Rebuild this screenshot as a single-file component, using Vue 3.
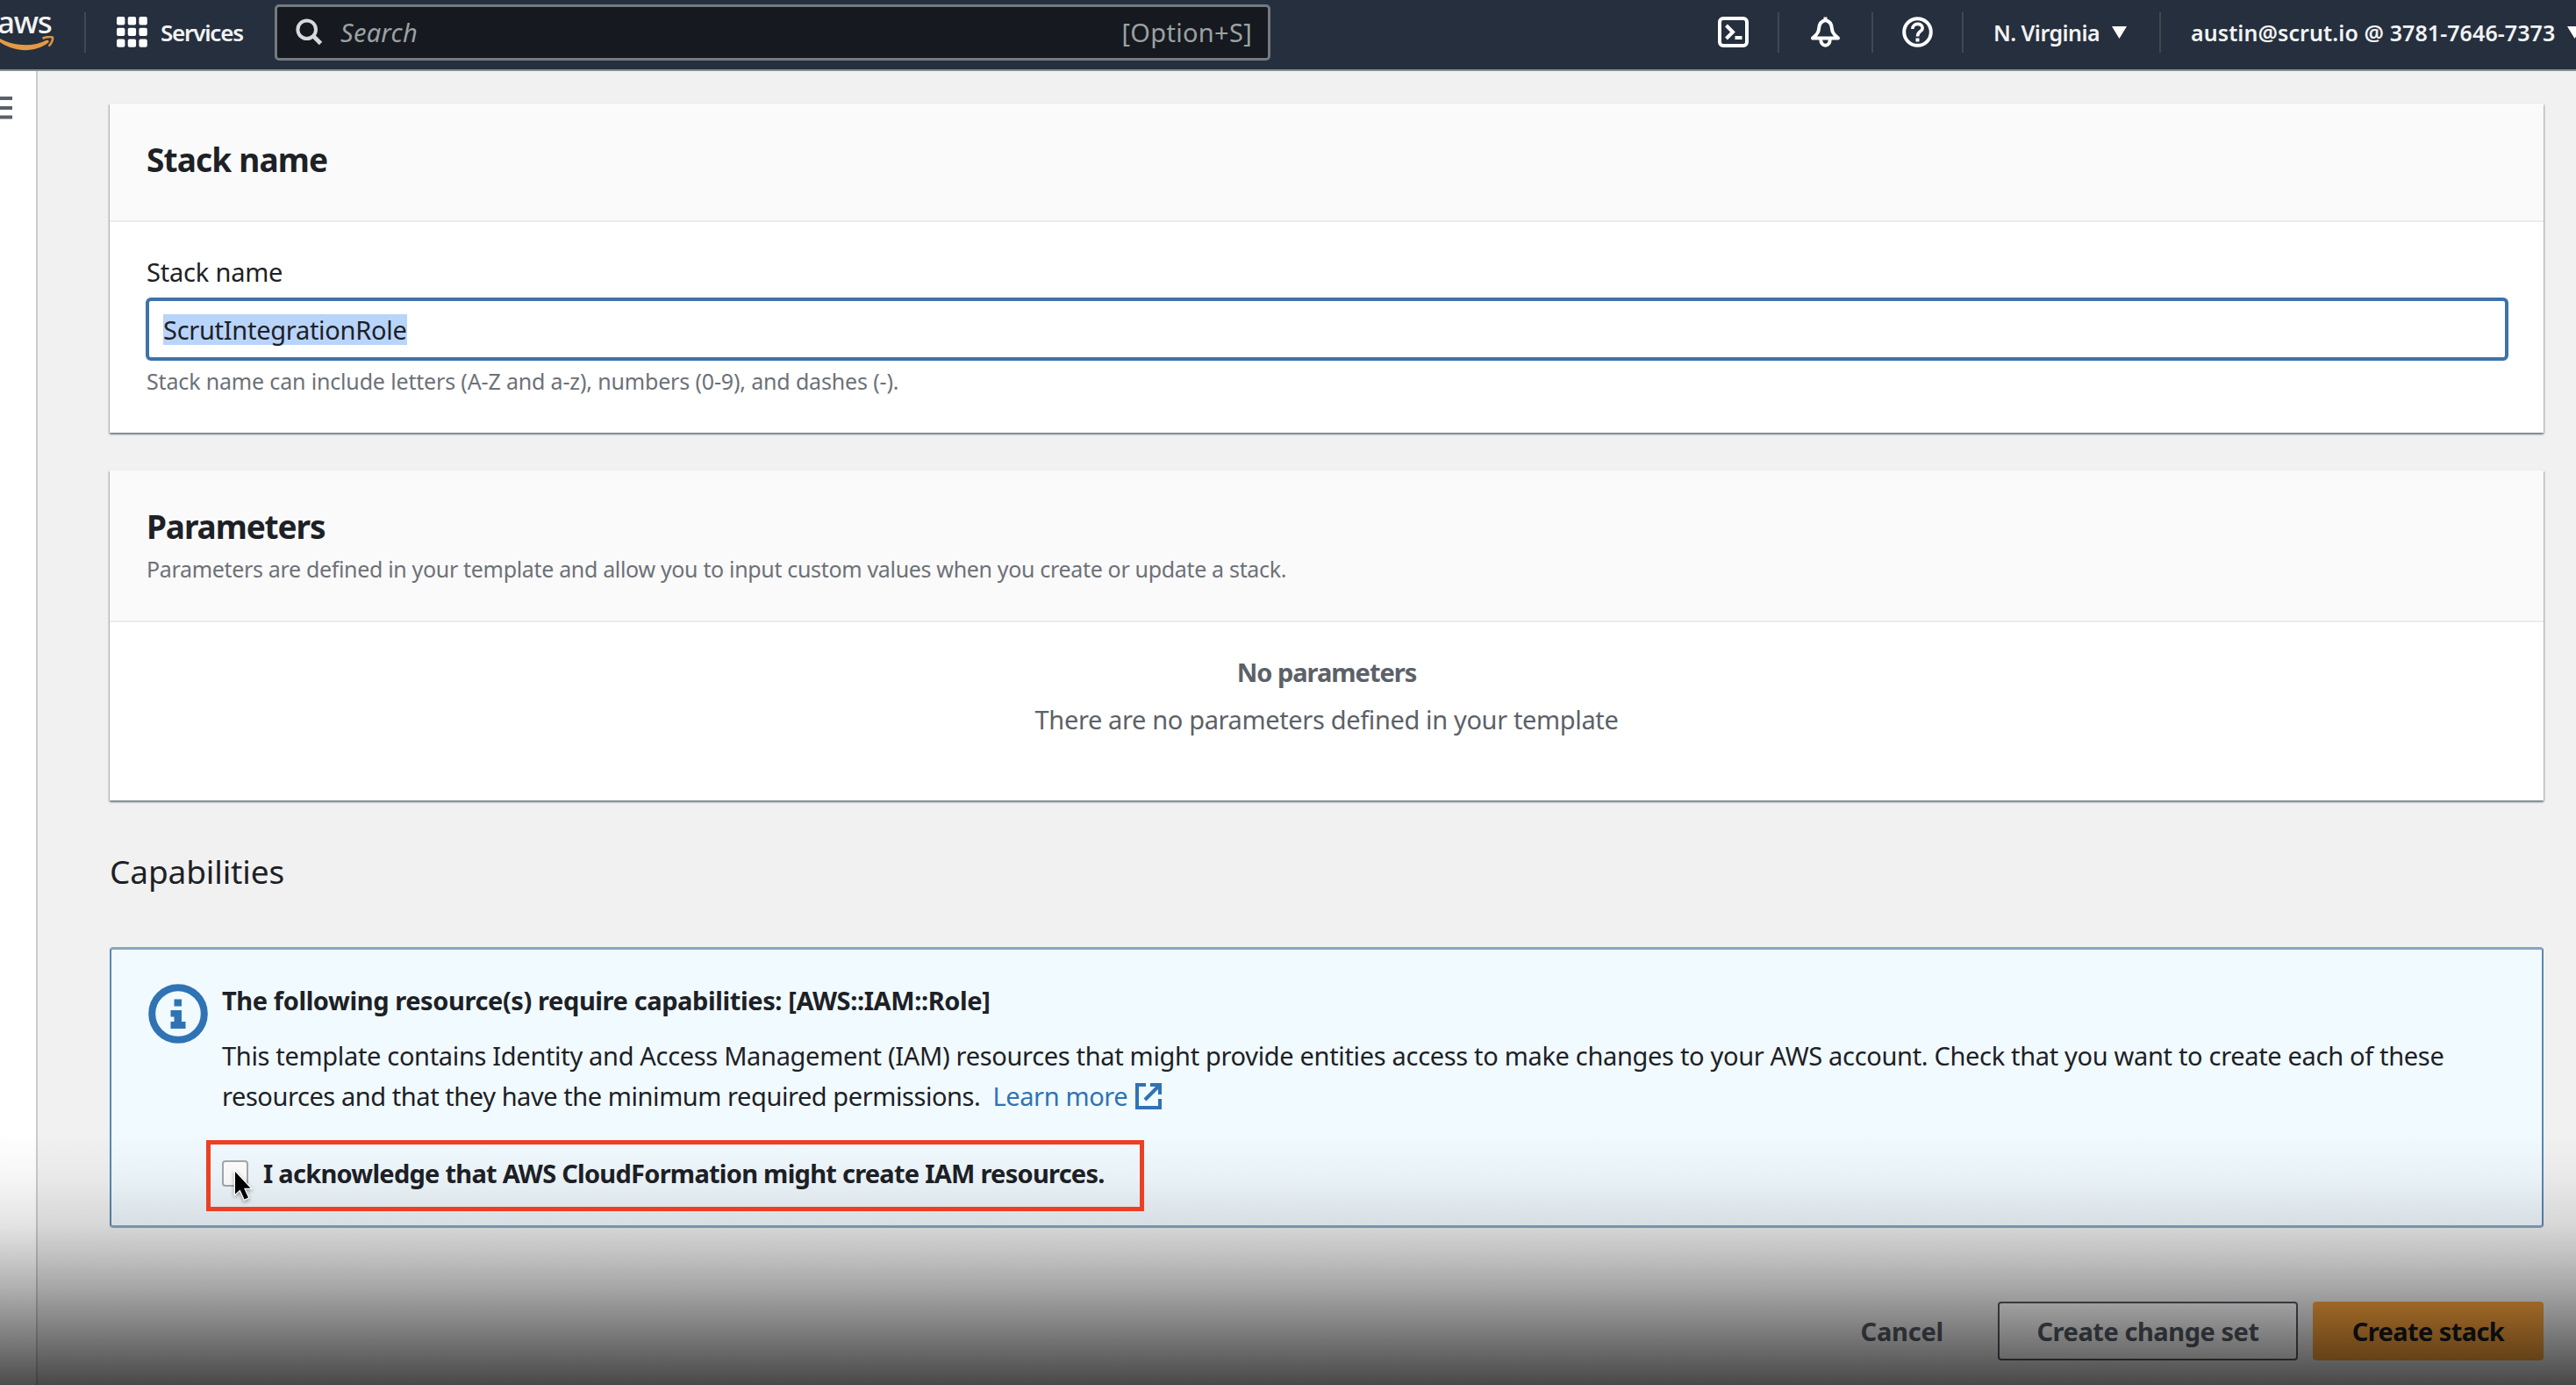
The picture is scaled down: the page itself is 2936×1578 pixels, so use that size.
<template>
  <div class="page">
    <header class="topbar">
      <div class="logo">
        <span class="logo-text">aws</span>
        <svg class="logo-smile" width="64" height="18" viewBox="0 0 64 18">
          <path d="M0 3 C17 12 38 12.500 52.500 5 C55 4 57 6 54.500 8 C40 19 17 19 0 7 Z" fill="#e39a45" />
          <path d="M48.500 2.700 C54 0.500 60 0.800 60 2 C60.300 4.500 58.500 9 55.500 11.500" fill="none" stroke="#dc9340" stroke-width="2.600" />
        </svg>
      </div>

      <div class="services">
        <svg width="35" height="35" viewBox="0 0 35 35" fill="#fff">
          <template v-for="y in gridSteps" :key="y">
            <rect v-for="x in gridSteps" :key="x" :x="x" :y="y" width="9.400" height="9.400" rx="2" />
          </template>
        </svg>
        <span class="services-label">Services</span>
      </div>

      <div class="search">
        <svg class="search-icon" width="31" height="31" viewBox="0 0 31 31" fill="none" stroke="#d5dbdb" stroke-width="4">
          <circle cx="12.700" cy="12.700" r="10.300" />
          <path d="M20 20 L28.500 28.500" stroke-width="4.800" />
        </svg>
        <span class="search-text">Search</span>
        <span class="search-hint">[Option+S]</span>
      </div>

      <div class="cell cell-shell">
        <svg width="35" height="35" viewBox="0 0 35 35" fill="none" stroke="#fff" stroke-width="4">
          <rect x="2" y="2" width="31" height="31" rx="4" />
          <path d="M9.500 10 L17 17.500 L9.500 25" />
          <path d="M19.500 24 H27.500" />
        </svg>
      </div>
      <div class="cell cell-bell">
        <svg width="35" height="35" viewBox="0 0 35 35" fill="none" stroke="#fff" stroke-width="4" stroke-linejoin="round">
          <path d="M17.500 4 C12.500 5 10.300 9 10 14 C9.700 19.500 6 21.500 3 24.500 H32 C29 21.500 25.300 19.500 25 14 C24.700 9 22.500 5 17.500 4 Z" />
          <path d="M17.500 0.500 V5" />
          <path d="M12.300 26 C12.300 35 22.700 35 22.700 26" />
        </svg>
      </div>
      <div class="cell cell-help">
        <svg width="35" height="35" viewBox="0 0 35 35" fill="none" stroke="#fff" stroke-width="4">
          <circle cx="17.500" cy="17.500" r="15.300" />
          <path d="M11.800 14 C11.800 6.500 23.200 6.800 23.200 13 C23.200 17 17.500 16.500 17.500 22.500" stroke-width="3.600" />
          <path d="M17.500 24.500 V28.500" />
        </svg>
      </div>
      <div class="cell cell-region">
        <span class="region-text">N. Virginia</span>
        <svg width="17" height="14" viewBox="0 0 17 14"><path d="M0 0 H17 L8.500 14 Z" fill="#fff" /></svg>
      </div>
      <div class="cell cell-account">
        <span class="account-text">austin@scrut.io @ 3781-7646-7373</span>
        <svg width="17" height="14" viewBox="0 0 17 14"><path d="M0 0 H17 L8.500 14 Z" fill="#fff" /></svg>
      </div>
    </header>

    <div class="layout">
      <aside class="sidebar">
        <svg width="14" height="26" viewBox="0 0 14 26" fill="#5a6069">
          <rect x="0" y="0" width="14" height="4" />
          <rect x="0" y="11" width="14" height="4" />
          <rect x="0" y="21.500" width="14" height="4" />
        </svg>
      </aside>

      <main class="content">
        <section class="card card-stack">
          <div class="card-header">
            <h2 class="card-title">Stack name</h2>
          </div>
          <div class="card-body">
            <label class="label">Stack name</label>
            <div class="input">
              <span class="selection">{{ stackName }}</span>
            </div>
            <p class="hint">Stack name can include letters (A-Z and a-z), numbers (0-9), and dashes (-).</p>
          </div>
        </section>

        <section class="card card-params">
          <div class="card-header">
            <h2 class="card-title params-title">Parameters</h2>
            <p class="description">Parameters are defined in your template and allow you to input custom values when you create or update a stack.</p>
          </div>
          <div class="empty">
            <p class="empty-title">No parameters</p>
            <p class="empty-text">There are no parameters defined in your template</p>
          </div>
        </section>

        <h2 class="capabilities">Capabilities</h2>

        <section class="alert">
          <svg class="info-icon" width="68" height="68" viewBox="0 0 68 68">
            <circle cx="34" cy="34" r="29.800" fill="none" stroke="#2f73b4" stroke-width="8" />
            <path d="M29.500 17.500 h8.500 v8 h-8.500 z M25.500 30 h12.500 v13 h4.500 v8 h-17 v-8 h4 v-5.500 h-4 z" fill="#2f73b4" />
          </svg>
          <div class="alert-content">
            <p class="alert-title">The following resource(s) require capabilities: [AWS::IAM::Role]</p>
            <p class="alert-text">
              <span class="line-one">This template contains Identity and Access Management (IAM) resources that might provide entities access to make changes to your AWS account. Check that you want to create each of these</span><br />
              <span class="line-two">resources and that they have the minimum required permissions.</span>
              <a class="learn-more">Learn more<svg class="external" width="30" height="30" viewBox="0 0 30 30" fill="none" stroke="#2f73b4" stroke-width="4">
                <path d="M12 2 H2 V28 H28 V18" />
                <path d="M17 2 H28 V13" />
                <path d="M28 2 L11 19" />
              </svg></a>
            </p>
            <div class="acknowledge">
              <span class="checkbox"></span>
              <span class="acknowledge-text">I acknowledge that AWS CloudFormation might create IAM resources.</span>
              <span class="highlight"></span>
              <svg class="cursor" width="28" height="42" viewBox="0 0 28 42">
                <path d="M3 3 V28.500 L8.600 23.400 L13.600 34.500 L18 32.500 L13 21.700 H20.500 Z" fill="#000" stroke="#fff" stroke-width="2.500" paint-order="stroke" />
              </svg>
            </div>
          </div>
        </section>

        <div class="actions">
          <button class="btn btn-link">Cancel</button>
          <button class="btn btn-normal">Create change set</button>
          <button class="btn btn-primary">Create stack</button>
        </div>
      </main>
    </div>

    <div class="fade"></div>
  </div>
</template>

<script setup>
import { ref } from 'vue';

const stackName = ref('ScrutIntegrationRole');
const gridSteps = [0, 12.7, 25.4];
</script>

<style>
body {
  margin: 0;
  overflow: hidden;
}
</style>

<style scoped>
.page {
  position: relative;
  width: 2936px;
  height: 1578px;
  overflow: hidden;
  background: #f1f1f1;
  color: #1d2126;
  font-family: 'Noto Sans', 'Open Sans', sans-serif;
  font-size: 29px;
  line-height: 46px;
  white-space: nowrap;
}

.page * {
  box-sizing: border-box;
}

p,
h2 {
  margin: 0;
}

svg {
  flex-shrink: 0;
}

/* Top bar */
.topbar {
  display: flex;
  align-items: center;
  height: 81px;
  padding-bottom: 6px;
  background: #252f3e;
  border-bottom: 2px solid #8b9097;
  color: #f2f3f3;
}

.topbar > * {
  flex-shrink: 0;
}

.logo {
  width: 98px;
  height: 46px;
  border-right: 2px solid #414852;
}

.logo-text {
  display: block;
  margin-left: -3px;
  font-size: 35px;
  font-weight: 500;
  line-height: 22px;
  letter-spacing: -1.3px;
}

.logo-smile {
  display: block;
  margin-top: 5px;
}

.services {
  display: flex;
  align-items: center;
  gap: 15px;
  width: 215px;
  padding-left: 35px;
}

.services-label {
  font-size: 26px;
  font-weight: 600;
  letter-spacing: -1.2px;
}

.search {
  display: flex;
  align-items: center;
  width: 1135px;
  height: 64px;
  padding: 0 18px 0 21px;
  background: #16191f;
  border: 3px solid #737b7f;
  border-radius: 5px;
  color: #9aa2a2;
}

.search-text {
  margin-left: 20px;
  padding-top: 1px;
  font-style: italic;
  letter-spacing: 0.26px;
}

.search-hint {
  margin-left: auto;
  padding-top: 1px;
  letter-spacing: 0.3px;
}

.cell {
  display: flex;
  align-items: center;
  justify-content: center;
  height: 46px;
  border-left: 2px solid #414852;
}

.cell-shell {
  width: 104px;
  margin-left: 474px;
  border-left-color: transparent;
}

.cell-bell {
  width: 107px;
}

.cell-help {
  width: 103px;
}

.cell-region,
.cell-account {
  justify-content: flex-start;
  gap: 14px;
  padding-left: 34px;
  font-size: 25px;
  font-weight: 600;
}

.cell-region {
  width: 225px;
}

.region-text {
  letter-spacing: -0.54px;
}

.account-text {
  letter-spacing: 0.08px;
}

/* Page layout */
.layout {
  display: flex;
  height: 1497px;
}

.sidebar {
  width: 43px;
  padding-top: 29px;
  background: #fff;
  border-right: 2px solid #c9cdce;
}

.sidebar svg {
  display: block;
}

.content {
  flex: 1;
  padding: 37px 37px 0 82px;
}

/* Cards */
.card {
  background: #fff;
  box-shadow: 0 2px 2px rgba(0, 28, 36, 0.4), 1px 1px 2px rgba(0, 28, 36, 0.2), -1px 1px 2px rgba(0, 28, 36, 0.2);
}

.card-stack {
  height: 375px;
}

.card-params {
  height: 376px;
  margin-top: 43px;
}

.card-header {
  height: 135px;
  padding: 41px 42px 0;
  background: #fafafa;
  border-bottom: 2px solid #ececec;
}

.card-params .card-header {
  height: 173px;
}

.card-title {
  font-size: 37px;
  font-weight: 700;
  letter-spacing: -0.84px;
}

.params-title {
  letter-spacing: -1.11px;
}

.card-body {
  padding: 34px 40px 0 41px;
}

.label {
  display: block;
  padding-left: 1px;
  letter-spacing: -0.2px;
}

.input {
  display: flex;
  align-items: center;
  height: 72px;
  margin-top: 6px;
  padding-left: 16px;
  border: 4px solid #3f72a8;
  border-radius: 6px;
}

.selection {
  background: #b9d4fb;
  line-height: 35px;
  letter-spacing: -0.28px;
}

.hint,
.description {
  font-size: 25px;
  line-height: 38px;
  color: #6d7178;
}

.hint {
  margin-top: 4px;
  padding-left: 1px;
  letter-spacing: -0.16px;
}

.description {
  margin-top: 6px;
  letter-spacing: -0.33px;
}

.empty {
  padding-top: 34px;
  text-align: center;
  color: #5c6168;
}

.empty-title {
  font-weight: 700;
  letter-spacing: -1.01px;
}

.empty-text {
  margin-top: 8px;
  letter-spacing: -0.36px;
}

.capabilities {
  margin-top: 58px;
  font-size: 37px;
  font-weight: 400;
  letter-spacing: -0.12px;
}

/* Info alert */
.alert {
  display: flex;
  gap: 16px;
  height: 320px;
  margin-top: 63px;
  padding: 35px 40px 0 42px;
  background: #f1faff;
  border-style: solid;
  border-width: 3px 2px;
  border-color: #89a6bf #5888b3;
  border-radius: 4px;
}

.info-icon {
  margin-top: 4px;
}

.alert-title {
  font-weight: 700;
  letter-spacing: -0.4px;
}

.alert-text {
  margin-top: 17px;
}

.line-one {
  letter-spacing: -0.325px;
}

.line-two {
  letter-spacing: -0.43px;
}

.learn-more {
  margin-left: 14px;
  color: #2f73b4;
  letter-spacing: -0.37px;
}

.external {
  margin-left: 9px;
  vertical-align: -4px;
}

.acknowledge {
  position: relative;
  display: flex;
  align-items: center;
  gap: 17px;
  margin-top: 42px;
}

.checkbox {
  width: 30px;
  height: 30px;
  background: #fff;
  border: 2px solid #a4abaf;
  border-radius: 4px;
}

.acknowledge-text {
  font-weight: 700;
  letter-spacing: -0.74px;
}

.highlight {
  position: absolute;
  z-index: 2;
  top: -15px;
  left: -18px;
  width: 1069px;
  height: 81px;
  border: 5px solid #ec4024;
}

.cursor {
  position: absolute;
  z-index: 2;
  top: 18px;
  left: 12px;
  filter: drop-shadow(0 2px 2px rgba(0, 0, 0, 0.35));
}

/* Footer buttons */
.actions {
  display: flex;
  justify-content: flex-end;
  margin-top: 84px;
}

.btn {
  height: 67px;
  padding: 0 0 1px;
  border: 2px solid transparent;
  border-radius: 4px;
  background: none;
  color: #545b64;
  font-family: inherit;
  font-size: 29px;
  font-weight: 700;
}

.btn-link {
  margin-right: 60px;
  letter-spacing: -0.22px;
}

.btn-normal {
  width: 342px;
  margin-right: 17px;
  background: #fff;
  border-color: #545b64;
  letter-spacing: -0.45px;
}

.btn-primary {
  width: 263px;
  background: #f9a33c;
  color: #16191f;
  letter-spacing: -0.6px;
}

/* Dark fade over the bottom of the page */
.fade {
  position: absolute;
  right: 0;
  bottom: 0;
  left: 0;
  height: 288px;
  background: linear-gradient(
    rgba(0, 0, 0, 0) 0%,
    rgba(0, 0, 0, 0.035) 18%,
    rgba(0, 0, 0, 0.11) 37%,
    rgba(0, 0, 0, 0.21) 50%,
    rgba(0, 0, 0, 0.31) 61.5%,
    rgba(0, 0, 0, 0.375) 68%,
    rgba(0, 0, 0, 0.59) 89%,
    rgba(0, 0, 0, 0.7) 100%
  );
}
</style>
